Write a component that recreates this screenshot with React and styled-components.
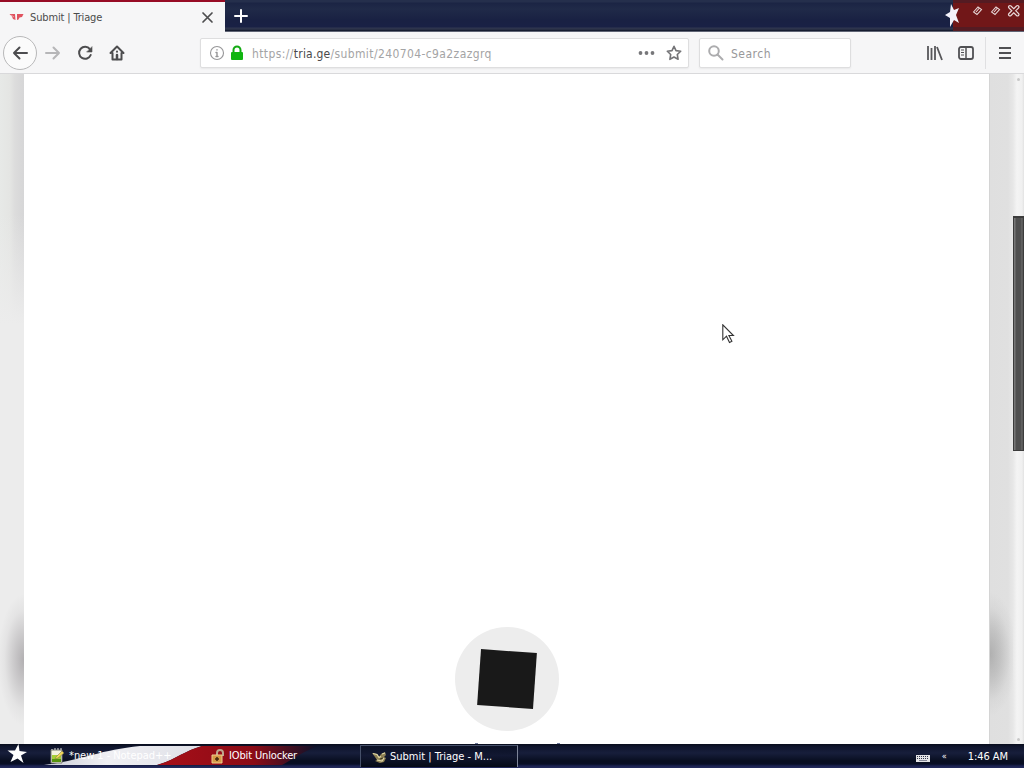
import styled, { createGlobalStyle } from "styled-components";

const GlobalStyle = createGlobalStyle`
  * {
    box-sizing: border-box;
  }

  body {
    margin: 0;
    overflow: hidden;
    font-family: "DejaVu Sans Condensed", "DejaVu Sans", sans-serif;
    font-stretch: condensed;
    font-size: 11px;
  }

  svg {
    display: block;
    flex: none;
  }
`;

const Screen = styled.div`
  width: 1024px;
  height: 768px;
  display: flex;
  flex-direction: column;
  overflow: hidden;
  background: #fff;
`;

const TabBar = styled.div`
  height: 32px;
  flex: none;
  display: flex;
  background: linear-gradient(#252f4c 0, #252f4c 2px, #1b2444 3px, #202a48 9px, #192143 20px, #192145 27px, #303750 28px, #242b40 30px, #070d20 31px, #b9bdca 32px);
`;

const Tab = styled.div`
  width: 225px;
  height: 32px;
  padding: 0 11px 0 9px;
  display: flex;
  align-items: center;
  border-top: 2px solid #970c25;
  background: #f6f6f7;
  color: #4b4b4b;
`;

const Label = styled.span`
  flex: none;
  white-space: pre;
  line-height: 16px;
  padding-top: ${(props) => props.$drop || 0}px;
  font-size: ${(props) => props.$size || 11}px;
  letter-spacing: ${(props) => props.$spacing || 0}px;
  color: ${(props) => props.$color || "inherit"};
  margin-left: ${(props) => props.$left || 0}px;
`;

const Spacer = styled.div`
  flex: 1;
`;

const Gap = styled.div`
  width: ${(props) => props.$width}px;
  flex: none;
`;

const NewTab = styled.div`
  padding: 8px 0 0 8px;
`;

const TitleEnd = styled.div`
  width: 80px;
  height: 31px;
`;

const Toolbar = styled.div`
  height: 42px;
  flex: none;
  display: flex;
  align-items: center;
  padding: 1px 11px 0 3px;
  background: #f6f6f7;
  border-bottom: 1px solid #d9d9db;
`;

const BackButton = styled.div`
  width: 34px;
  height: 34px;
  display: flex;
  align-items: center;
  justify-content: center;
  border: 1px solid #b8b8b9;
  border-radius: 50%;
  background: #fbfbfb;
`;

const NavButtons = styled.div`
  width: 163px;
  display: flex;
  align-items: center;
  gap: 16px;
  padding-left: 8px;
`;

const Field = styled.div`
  width: ${(props) => props.$width}px;
  height: 30px;
  margin-right: ${(props) => props.$right || 0}px;
  display: flex;
  align-items: center;
  padding: 0 6px 0 8px;
  border: 1px solid #dededf;
  border-radius: 2px;
  background: #fff;
  box-shadow: 0 1px 2px rgba(0, 0, 0, 0.06);
`;

const ToolDivider = styled.div`
  width: 1px;
  height: 32px;
  margin: 0 10px 0 11px;
  background: #e0e0e2;
`;

const Page = styled.main`
  flex: 1;
  min-height: 0;
  display: flex;
`;

const LeftGutter = styled.div`
  width: 24px;
  background:
    radial-gradient(ellipse 26px 66px at 24px 586px, rgba(120, 115, 120, 0.5), rgba(120, 115, 120, 0.28) 40%, rgba(120, 115, 120, 0.07) 75%, rgba(120, 115, 120, 0)),
    linear-gradient(to bottom, transparent 0, transparent 140px, #ececec 250px),
    linear-gradient(to right, #e7e9e7 0, #e4e5e3 10px, #dcdcdc 15px, #d6d6d7 24px);
`;

const Content = styled.div`
  flex: 1;
  display: flex;
  flex-direction: column;
  align-items: center;
  justify-content: flex-end;
  background: #fff;
`;

const Loader = styled.div`
  width: 104px;
  height: 104px;
  margin: 0 0 12px 1px;
  display: flex;
  align-items: center;
  justify-content: center;
  border-radius: 50%;
  background: #ededed;
`;

const LoaderSquare = styled.div`
  width: 56px;
  height: 56px;
  background: #191919;
  transform: rotate(4deg);
`;

const ClippedText = styled.div`
  width: 85px;
  height: 1px;
  margin-left: 21px;
  display: flex;
  justify-content: space-between;

  &::before,
  &::after {
    content: "";
    width: 3px;
    height: 1px;
    background: #6c779a;
  }
`;

const RightGutter = styled.div`
  width: 24px;
  border-left: 1px solid #d4d4d4;
  background:
    radial-gradient(ellipse 27px 62px at 0 580px, rgba(105, 105, 105, 0.4), rgba(105, 105, 105, 0.24) 40%, rgba(105, 105, 105, 0.06) 75%, rgba(105, 105, 105, 0)),
    linear-gradient(to right, #dfdfdf, #e0e0e0 18px, #e7e7e7);
`;

const Scrollbar = styled.div`
  width: 11px;
  padding: 4px 0 3px;
  display: flex;
  flex-direction: column;
  align-items: center;
  background: linear-gradient(to right, #e7e7e7, #f4f4f4 4px, #f0f0f0 9px, #e2e2e2);
`;

const Thumb = styled.div`
  width: 11px;
  height: 235px;
  margin: 135px 0 auto;
  border: 1px solid #3c3c3c;
  border-top-width: 2px;
  background: linear-gradient(to right, #777 0, #777 1px, #505050 2px, #505050 7px, #707070 8px, #444 9px);
`;

const ScrollArrow = styled.div`
  width: 3px;
  height: 3px;
  border-radius: 50%;
  background: #c8c8c8;
`;

const TaskBar = styled.footer`
  height: 24px;
  flex: none;
  display: flex;
  align-items: center;
  padding-right: 16px;
  color: #fff;
  background: linear-gradient(#080d1d 0, #10162e 3px, #171e3b 9px, #080e20 17px, #080e25 20px, #1b2251 22px, #242b5d 24px);
`;

const FlagBackdrop = styled.div`
  position: relative;
  width: 360px;
  height: 24px;
  display: flex;
  align-items: center;
  padding-left: 7px;

  > * {
    position: relative;
  }
`;

const FlagLayer = styled.div`
  && {
    position: absolute;
    left: 0;
    top: 0;
  }
`;

const StarSlot = styled.div`
  margin-top: -4px;
`;

const TaskButton = styled.div`
  width: 158px;
  height: 22px;
  display: flex;
  align-items: center;
  padding-left: 11px;
  border: 1px solid #465069;
  border-bottom: 0;
  border-right-color: #7d8498;
  background: linear-gradient(#0b1125, #121832 45%, #050a16);
`;

const StarMark = ({ size, points }) => (
  <svg width={size} height={size} viewBox="0 0 20 20">
    <polygon points={points} fill="#fff" />
  </svg>
);

const TriageIcon = () => (
  <svg width="15" height="10" viewBox="0 0 15 10">
    <path d="M.5 2h5.500l.5 6-2.500-1-1-2.500z M8 2h6.500l-1.500 3-2.500.5-1 2-1.500.5z" fill="#e0525f" />
    <path d="M2 3l3 2" stroke="#f0a0a6" />
  </svg>
);

const Stroke = ({ children, size = 16, color = "#4d4d4f", width = 2 }) => (
  <svg width={size} height={size} viewBox={`0 0 ${size} ${size}`} fill="none" stroke={color} strokeWidth={width} strokeLinecap="round" strokeLinejoin="round">
    {children}
  </svg>
);

// Titlebar corner: red stripe with star and the three window buttons
const WindowButtons = () => (
  <svg width="80" height="31" viewBox="0 0 80 31">
    <path d="M9 0h71v31H9z" fill="#711718" />
    <path d="M9 0h71v3H9z M9 27h71v4H9z" fill="#541b22" />
    <path d="M7 4l3 6 5-2-3 7 3 8-5-3-4 7 0-9-5-3 5-3z" fill="#f4f3fb" />
    <g fill="none" stroke="#e8d9d9" strokeWidth="1.100">
      <path d="M29.500 12l4.500-5 3.500 2.500-4.500 5z M32 12l3-3.500" />
      <path d="M47.500 12l4.500-5 3.500 2.500-4.500 5z M50 12l3-3.500" />
      <path d="M66 7l7.500 7.500M73.500 7l-7.500 7.500" strokeWidth="4" strokeLinecap="round" />
      <path d="M66 7l7.500 7.500M73.500 7l-7.500 7.500" stroke="#711718" strokeWidth="1.700" strokeLinecap="round" />
    </g>
  </svg>
);

// Striped flag behind the first task buttons
const Flag = () => (
  <svg width="360" height="24" viewBox="0 0 360 24">
    <defs>
      <linearGradient id="flagRed" x1="0" x2="1">
        <stop offset="0" stopColor="#a80f18" />
        <stop offset=".6" stopColor="#8b0b16" />
        <stop offset="1" stopColor="#0c1229" />
      </linearGradient>
      <linearGradient id="flagWhite" x1="0" x2="1">
        <stop offset="0" stopColor="#c9cbd8" />
        <stop offset=".4" stopColor="#f0f0f4" />
        <stop offset="1" stopColor="#dedfe6" />
      </linearGradient>
    </defs>
    <path d="M44 21c35-4 55-15 96-19h62c-18 5-27 14-45 19z" fill="url(#flagWhite)" />
    <path d="M202 2h116c-14 5-23 12-36 19H157c18-5 27-14 45-19z" fill="url(#flagRed)" />
  </svg>
);

const NotepadIcon = () => (
  <svg width="14" height="16" viewBox="0 0 14 16">
    <path d="M1 2h11v13H1z" fill="#f3f2df" stroke="#777b70" />
    <path d="M2 2v-1M5 2V0M8 2V0M11 2V0" stroke="#ddd" />
    <path d="M2 7h9v7H2z" fill="#a5cf35" />
    <path d="M2 11h9v3H2z" fill="#57940e" />
    <path d="M6 9l6-6 2 2-6 5-3 1z" fill="#f2d75b" stroke="#777544" strokeWidth=".5" />
  </svg>
);

const UnlockerIcon = () => (
  <svg width="14" height="15" viewBox="0 0 14 15">
    <path d="M6 7V4a3 3 0 0 1 6 0v3" fill="none" stroke="#bda78d" strokeWidth="2" />
    <path d="M1 6h10v8H1z" fill="#d59a46" stroke="#f0cc8f" />
    <path d="M6 8v4M4 10h4" stroke="#46260d" strokeWidth="1.5" />
  </svg>
);

const BrowserIcon = () => (
  <svg width="15" height="14" viewBox="0 0 15 14">
    <path d="M0 3l5 1 2 3 2-3 4-2 1 3-2 2 2 1-2 4-4 1-5-2 2-1-2-3z" fill="#8d8054" />
    <path d="M1 3.500l4 1 2 3 2-1M5 10l5 1 2-3M10 4l3-1" fill="none" stroke="#e1d8a8" strokeWidth="1.200" />
    <path d="M8 9l3-1" stroke="#3d3720" />
  </svg>
);

const KeyboardIcon = () => (
  <svg width="14" height="7" viewBox="0 0 14 7">
    <path d="M0 0h14v7H0z" fill="#e4e4e7" />
    <path d="M1 1.500h12M1 3.500h12" stroke="#31364a" strokeDasharray="1 1" />
    <path d="M3 5.500h8" stroke="#868998" />
  </svg>
);

const KeyboardSlot = styled.div`
  padding-top: 4px;
`;

const PointerLayer = styled.div`
  position: absolute;
  left: 722px;
  top: 324px;
  pointer-events: none;
`;

export default function App() {
  return (
    <>
      <GlobalStyle />
      <Screen>
        <TabBar>
          <Tab>
            <TriageIcon />
            <Label $left={6} $drop={2} $spacing={-0.15}>Submit | Triage</Label>
            <Spacer />
            <Stroke size={13} width={1.7}><path d="M2 2l9 9M11 2l-9 9" /></Stroke>
          </Tab>
          <NewTab>
            <Stroke size={16} color="#fff"><path d="M8 2v12M2 8h12" /></Stroke>
          </NewTab>
          <Spacer />
          <TitleEnd><WindowButtons /></TitleEnd>
        </TabBar>
        <Toolbar>
          <BackButton>
            <Stroke><path d="M15 8H2M7.500 2.500L2 8l5.500 5.500" /></Stroke>
          </BackButton>
          <NavButtons>
            <Stroke color="#b6b6b8"><path d="M1 8h13M8.500 2.500L14 8l-5.500 5.500" /></Stroke>
            <Stroke><path d="M13.700 10a6 6 0 1 1-.8-5.800" /><path d="M15 2v5h-5z" fill="#4d4d4f" strokeWidth=".6" /></Stroke>
            <Stroke><path d="M1.500 8L8 1.500 14.500 8M3.500 8v6.500h9V8" /><path d="M8 14v-4" strokeWidth="2.500" /><path d="M8 6.500v.2" /></Stroke>
          </NavButtons>
          <Field $width={489} $right={10}>
            <Stroke color="#969698" width={1.1}><circle cx="8" cy="8" r="6.500" /><path d="M8 7.500v4M8 4.800v.2M7 7.500h1M7 11.500h2" strokeWidth="1.400" /></Stroke>
            <Gap $width={5} />
            <svg width="14" height="16" viewBox="0 0 14 16">
              <path d="M3.500 8V5a3.500 3.500 0 0 1 7 0v3" fill="none" stroke="#12aa12" strokeWidth="2" />
              <rect x="1" y="7" width="12" height="8" rx="1" fill="#10b510" />
            </svg>
            <Label $left={8} $drop={2} $size={12} $spacing={0.39} $color="#a4a4a5">
              https://<Label $size={12} $spacing={0.2} $color="#4a4a4a">tria.ge</Label>/submit/240704-c9a2zazgrq
            </Label>
            <Spacer />
            <svg width="17" height="6" viewBox="0 0 17 6" fill="#77777a">
              <circle cx="2.500" cy="3" r="1.900" /><circle cx="8.500" cy="3" r="1.900" /><circle cx="14.500" cy="3" r="1.900" />
            </svg>
            <Gap $width={11} />
            <svg width="16" height="16" viewBox="0 0 16 16">
              <path d="M8 1.300l2 4.300 4.700.6-3.400 3.300.8 4.800L8 12l-4.100 2.300.8-4.800-3.400-3.300L6 5.600z" fill="none" stroke="#747477" strokeWidth="1.600" strokeLinejoin="round" />
            </svg>
          </Field>
          <Field $width={152}>
            <Stroke color="#acacae"><circle cx="6" cy="6" r="4.800" /><path d="M9.500 9.500l5 5" /></Stroke>
            <Label $left={7} $drop={2} $size={12} $spacing={0.5} $color="#98989a">Search</Label>
          </Field>
          <Spacer />
          <svg width="17" height="16" viewBox="0 0 17 16" fill="none" stroke="#57575a" strokeWidth="1.800">
            <path d="M2 1v14M5.500 3v12M9 1v14M11 2l5 13" />
          </svg>
          <Gap $width={15} />
          <svg width="16" height="16" viewBox="0 0 16 16" fill="none" stroke="#505053">
            <rect x="1" y="2" width="14" height="12" rx="2" strokeWidth="1.800" />
            <path d="M8 2v12" strokeWidth="1.500" /><path d="M3 5h3M3 7.500h3M3 10h3" />
          </svg>
          <ToolDivider />
          <svg width="17" height="16" viewBox="0 0 17 16" fill="none" stroke="#505053" strokeWidth="1.800">
            <path d="M3 3h12M3 8h12M3 13h12" />
          </svg>
        </Toolbar>
        <Page>
          <LeftGutter />
          <Content>
            <Loader><LoaderSquare /></Loader>
            <ClippedText />
          </Content>
          <RightGutter />
          <Scrollbar>
            <ScrollArrow />
            <Thumb />
            <ScrollArrow />
          </Scrollbar>
        </Page>
        <TaskBar>
          <FlagBackdrop>
            <FlagLayer><Flag /></FlagLayer>
            <StarSlot>
              <StarMark size={20} points="11.500,0 12.500,7 20,8 14,11.500 16.500,19 10.500,14.500 3.500,18 6.500,11 0.500,6.500 8,6.500" />
            </StarSlot>
            <Gap $width={23} />
            <NotepadIcon />
            <Label $left={5} $spacing={-0.05}>*new 1 - Notepad++</Label>
            <Spacer />
            <UnlockerIcon />
            <Label $left={4} $spacing={-0.15}>IObit Unlocker</Label>
            <Gap $width={63} />
          </FlagBackdrop>
          <TaskButton>
            <BrowserIcon />
            <Label $left={3} $drop={1}>Submit | Triage - M...</Label>
          </TaskButton>
          <Spacer />
          <KeyboardSlot><KeyboardIcon /></KeyboardSlot>
          <Label $left={12} $size={9}>«</Label>
          <Label $left={21} $drop={1} $spacing={-0.05}>1:46 AM</Label>
        </TaskBar>
      </Screen>
      <PointerLayer>
        <svg width="13" height="20" viewBox="0 0 13 20">
          <path d="M.8.800v15l3.700-3.600 3 6.300 2.400-1.200-3-5.800h4.500z" fill="#fff" stroke="#333" strokeWidth="1.100" />
        </svg>
      </PointerLayer>
    </>
  );
}
